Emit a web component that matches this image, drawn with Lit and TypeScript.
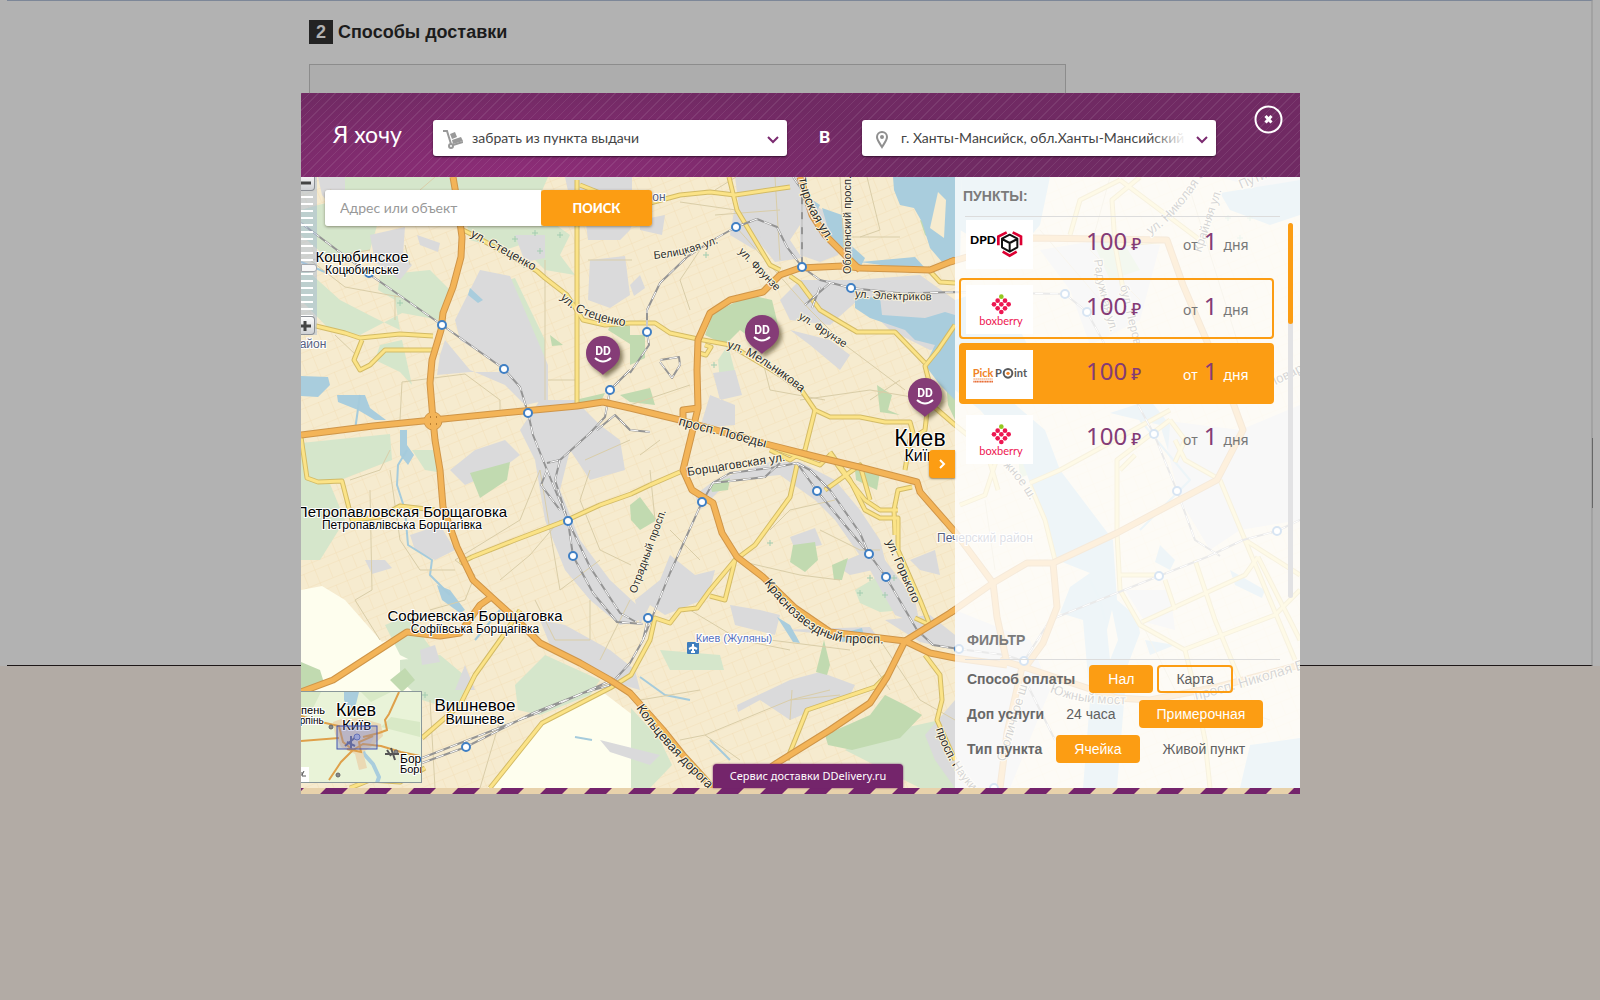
import { LitElement, html, svg, css } from "lit";
import { customElement, property, state } from "lit/decorators.js";

/* ---------- Map data ---------- */

const PALE = [
  "M301 590L322 586 345 600 382 642 398 637 440 700 421 692 301 692Z",
  "M301 520L305 535 301 553Z",
  "M488 788L545 722 600 690 634 716 634 740 645 760 640 788Z",
];
const LIGHT_GREEN = [
  "M345 177H548L538 200 560 215 520 245 505 250 470 240 462 200 440 190 412 190 410 200 345 200Z",
  "M301 265L340 300 375 318 400 330 395 300 378 290 380 275 430 270 450 290 440 320 402 313 360 335 330 330 301 300Z",
  "M318 205L362 195 380 215 370 250 330 260 301 235 301 210Z",
  "M301 443L390 434 392 460 330 484 345 520 320 560 301 560Z",
  "M412 450H437V472L425 470Z",
  "M490 285L515 278 545 340 545 362 530 362Z",
  "M520 230L556 225 570 235 560 255 575 275 545 270 525 250Z",
  "M515 685L545 655 600 680 590 695 540 715 518 710Z",
  "M400 660L440 655 470 680 455 710 422 700 400 680Z M385 625L410 615 425 640 440 660 420 665 400 655Z",
  "M660 650L720 655 724 670 670 670Z",
  "M855 590L885 572 897 590 905 610 880 612 860 603Z",
  "M631 708L660 740 672 765 650 788H631Z",
  "M845 750L872 735 940 720 955 740V788H920Z",
  "M718 360L728 345 735 372 720 382Z",
  "M412 385L402 340 380 345 375 360 400 372Z",
];
const GREEN = [
  "M713 313L750 295 772 300 778 325 760 345 740 330 725 345 705 335Z",
  "M470 473L510 462 507 480 480 498Z",
  "M301 662L320 670 325 686 301 691Z",
  "M390 680L405 668 415 680 402 692Z",
  "M630 335H645V358L630 365Z M620 395L650 388 655 405 630 402Z",
  "M630 505L640 497 657 520 640 530 631 520Z",
  "M793 545L815 542 818 560 805 572 790 562Z",
  "M855 470L880 472 877 490 856 480Z",
  "M885 695L905 705 922 715 900 738 852 750 828 745 825 735 870 715Z",
  "M824 640L830 665 827 675 816 672Z",
  "M877 385L892 395 888 410 900 415 880 412Z",
  "M920 220L935 225 938 245 925 235Z",
  "M550 335L563 345 552 346Z M575 400L605 393 600 403 580 404Z",
  "M630 344L608 330 612 322 630 326Z M710 484L730 478 728 490 712 492Z M832 565L848 558 842 580 834 580Z",
  "M945 370L955 360V420L948 405Z",
  "M1090 235L1125 245 1140 270 1110 280Z M1015 420L1040 470 1020 478Z",
];
const GRAY = [
  "M318 177H345V200L330 205 322 195Z",
  "M370 235L405 227 403 255 412 265 400 280 375 262Z",
  "M417 235L440 243 438 252 420 245Z",
  "M515 235H545V258L525 262Z",
  "M565 177H632V195L640 205 630 230 620 240H588L585 215 570 200Z",
  "M480 270L510 276 528 318 548 365V400L525 405 505 385 470 370 445 340 440 355 437 375 470 372 512 372 545 400 575 400 600 425 620 440 625 470 590 480 570 450 560 490 580 540 610 580 637 605 640 620 620 625 590 600 565 570 545 520 535 460 520 430 540 400 500 365 460 340 455 320Z",
  "M590 260L625 256 630 295 610 308 588 300Z",
  "M735 177H800V225L790 240 802 258 775 262 757 240 740 215Z",
  "M800 195L830 215 845 240 838 255 820 262 800 255Z",
  "M780 300L800 280 855 280 920 275 955 300V345L930 350 890 330 858 300 830 325 790 320Z",
  "M790 330L830 340 850 355 840 370 810 345Z",
  "M735 205L750 230 765 240 755 250 730 235Z",
  "M640 220L665 215 662 235 640 230Z M630 285L640 275 645 288 634 296Z",
  "M713 373L735 370 742 395 720 400Z M710 395L700 428 735 425 735 405Z",
  "M450 470L475 450 505 440 520 455 500 470 465 485Z",
  "M410 535L440 525 455 550 435 560 415 550Z",
  "M365 560L385 560 392 568 372 574Z",
  "M420 650L435 645 440 662 422 665Z",
  "M540 620L565 625 610 650 635 670 640 690 605 680 550 645Z",
  "M465 665L475 690 455 690Z",
  "M670 555L695 575 715 570 708 598 690 605 665 615 650 605 640 625 635 600 660 580Z",
  "M695 495L715 480 770 462 800 462 835 480 860 510 880 540 885 560 915 600 920 625 895 615 870 570 835 520 815 500 780 475 730 480 700 510Z",
  "M790 537L815 528 822 545 795 550Z",
  "M835 565L870 550 873 570 850 575Z",
  "M730 605L760 610 780 615 775 635 735 625Z",
  "M737 705L790 680 820 672 855 685 850 695 790 720 760 700 738 712Z",
  "M885 620L930 615 955 635V650L920 642Z",
  "M780 630L870 627 880 640 850 636Z",
  "M925 735L955 700V788L935 760Z",
  "M600 740L660 755 650 765 610 752Z M910 560L935 550 940 575 920 570Z",
  "M1040 250L1100 240 1160 245 1140 320 1090 345 1070 290Z",
  "M1160 420L1240 430 1300 405V520L1240 530 1210 550 1180 500Z",
  "M955 610L1030 640 1050 690 1010 788H955Z",
  "M1125 590L1170 590 1175 630 1145 622Z M1230 180L1300 200V177H1220Z",
];
const WATER = [
  "M893 177H962L960 262 942 262 930 248 922 222 914 208 900 205 894 190Z",
  "M822 208L842 215 845 240 865 258 860 268 845 250 830 235Z",
  "M808 197L820 205 815 215 809 210Z",
  "M855 298L880 297 882 315 925 318 945 312 955 315V400L940 385 925 365 935 345 915 340 905 330 870 318 855 308Z",
  "M860 262L915 257 925 268 895 267Z",
  "M301 376L328 377 330 385 318 397 301 396Z M337 395L365 395 370 408 386 420 375 420 358 410 338 402Z",
  "M400 430H407V445L414 455 408 465 400 455Z",
  "M437 585L450 590 465 610 460 613 442 600Z",
  "M470 288L483 300 478 303 468 295Z",
  "M777 617L790 625 800 643 793 642Z M835 635L862 628 865 640 840 642Z",
  "M962 177H1050L1040 225 1010 260 960 230Z",
  "M955 300L985 290 1010 310 1030 350 1010 400 1045 430 1060 470 1113 540 1117 600 1137 617 1140 633 1127 667 1117 788H1083L1090 700 1083 620 1060 613 1070 587 1090 573 1057 560 1030 483 1020 455 980 410 955 390Z",
  "M1220 193L1300 180V215L1270 225 1230 210Z",
  "M1160 545L1175 560 1170 570 1155 562Z M1230 570L1265 590 1262 598 1235 585Z M1145 640L1175 645 1150 655Z",
  "M1250 745L1300 738V788H1240Z M1150 400L1170 425 1168 450 1160 425 1110 413Z",
];
const ISLANDS = ["M938 192L946 200 944 238 930 228Z", "M1112 610L1118 640 1110 660 1107 630Z", "M985 345L1005 350 1000 375 985 365Z"];

const STREETS = [
  "M330 190L365 200 M420 190L435 177 M370 250L310 260 345 287 400 297 M410 265L405 245 M395 295L395 320",
  "M356 355L335 335 M402 382L400 420 M402 382L465 374 500 400 500 410 M545 260V400 M588 260H632 M548 380H577",
  "M680 202L736 210 M736 227L810 310 845 345 905 390 M700 250L680 280 690 310 M736 177L715 190 M715 215L780 210",
  "M775 177L780 260 M840 177L845 265 M867 177L880 230 860 237 M850 237H900 M870 400L900 380 M800 400L870 390 930 400",
  "M760 350L770 390 825 400 M630 405L690 385 M640 455L660 440 M670 530L700 560 M735 560L800 575 840 580 M770 530L790 510 835 500",
  "M820 530L860 550 880 550 M540 470L520 520 455 560 M455 560L475 575 465 600 430 610 M390 450L380 470 350 480",
  "M390 470L400 540 420 570 455 570 M370 490L372 590 355 600 380 640 M500 580L530 555 560 520 M540 470L560 590 600 560",
  "M590 470L580 500 600 550 631 565 M630 440L585 460 M535 600L555 640 590 640 590 600 M500 720L480 788 M430 700L435 788",
  "M680 740L705 735 740 760 M705 735L790 700 840 695 M790 700L830 690 M790 720L792 690 M880 640L920 700 955 720",
  "M690 610L740 640 790 650 M770 640L850 650 M870 660L890 690 M630 600L600 660 M650 470L655 520 M640 700L700 690",
  "M985 500L995 570 M1040 230L1100 300 M1110 177L1090 250 1140 300 M1190 190L1240 350 M1140 620L1180 700 M1210 700L1270 720",
];
const YELLOW = [
  "M316 326L345 333 360 338 400 334 433 336",
  "M362 340L354 360 360 370 370 365 385 350 432 350",
  "M301 437L307 478 318 482 342 481 352 520 380 517 400 506 435 510",
  "M463 230L475 236 537 271 545 278 567 295 583 320 605 325 630 323 655 323 670 333 698 339 730 345 780 375 802 391 815 410 830 417 860 417 885 422 910 422 915 440",
  "M577 180V405",
  "M580 185L600 193 650 203 680 195 710 192 735 195 790 187",
  "M729 177L737 210 755 240 770 265 780 270",
  "M790 276L800 283 820 310 840 322 857 332 895 332 925 363",
  "M955 325L938 350 925 366 930 385 925 430 910 440 905 470",
  "M932 405L955 425",
  "M927 268L940 282 955 283",
  "M705 345L711 347 706 355 699 353",
  "M460 563L472 557 515 540 565 521 600 505 631 494 650 485 680 472",
  "M422 738L460 705 475 675 505 633 520 610",
  "M490 788L542 723 610 688 631 675 650 640 655 618 670 623 680 610 697 608 710 590 735 560 755 545 790 497 797 465",
  "M735 560L725 600 710 596 M815 410L805 450 790 460 770 450",
  "M780 450L820 465 830 455 845 475 865 500 880 510 898 510 M825 490L860 465 870 500 M895 535L894 510 898 490 912 487",
  "M830 452L850 480 865 510 880 518 898 518 898 550 920 600 930 625 915 618",
  "M787 760L807 710 875 687 890 672 M925 655L940 675 942 700 937 720 955 760",
  "M350 788L370 780 400 782 425 768",
  "M1120 180L1080 200 1070 235 M1120 180L1200 240 M1167 240L1115 245 1112 200 1140 177 M1115 245L1125 300",
  "M955 425L980 445 998 455 985 495 960 505 M985 445L998 490",
  "M1117 533L1117 460 1170 420 M1117 533L1120 590 1140 625 1185 650 1195 690 1205 740 1210 788",
  "M1030 483L1060 470 1170 410 M1030 485L1045 520 1055 560 M1120 575H1160",
  "M1220 480L1245 540 1295 660 M1195 560L1215 620 1243 688 M1245 540L1300 575 M1258 557L1300 640",
  "M1142 622L1245 575 1258 557 M1183 650L1275 615 1300 590 M1165 580L1175 610",
  "M1175 440L1185 460 1217 478 M1170 420L1185 440 1175 462 M1135 455L1120 470",
];
const ORANGE = [
  "M453 177L457 200 462 237 461 257 453 287 443 313 441 330 432 360 430 383 433 420 435 440 440 470 443 507 457 547 473 580 497 602 517 620 540 643 580 663 610 680 630 693 663 730 683 755 713 788",
  "M301 435L373 426 433 420 513 412 577 406 603 402 630 408 680 420 770 445 817 457 863 468 917 482 920 492 955 532 993 583",
  "M683 424V410L698 408",
  "M955 260L930 270 897 269 860 268 843 266 800 268 780 275 763 292 730 300 710 313 698 340 697 370 698 408 692 433 683 470 692 490 713 503 722 533 737 557 763 577 795 608 830 632 905 641",
  "M800 177L812 215 825 235 860 270",
  "M955 610L905 641 930 653 955 658 1007 665",
  "M905 641L887 677 870 703 830 730 777 763 740 788",
  "M301 692L333 680 407 632 440 636 460 633 480 605 490 598",
  "M950 613L993 583 1027 563 1053 563 1117 533 1217 480 1243 430 1232 400 1217 365 1183 285 1167 240 1033 238 950 262",
  "M1053 563L1057 607 1043 643 1027 665 M993 583L997 617 1007 663 M1000 660L1027 668 1117 698 1150 700 1217 687 1300 665 M1022 667L1007 733 1000 788",
];
const RAILS = [
  "M301 223L369 274 442 325 504 369 520 387 528 413 533 435 547 470 568 521 590 567 620 613 636 622",
  "M568 521L573 556 593 593 617 622 643 624",
  "M630 370L610 390 605 417 590 433 560 460 547 463 M560 460L555 480 568 521 M547 470L541 485 560 510 M597 430L615 415 630 430 650 432",
  "M643 640L670 573 702 502 713 483 730 473 777 467 797 463 817 491 845 525 869 554 886 577 917 630 933 645 959 649",
  "M713 483L740 480 765 477 780 463 M797 463L810 470 830 490 860 533 869 554",
  "M422 763L466 747 533 713 583 693 610 685 630 663 643 640 648 618 M422 758L540 712 610 681",
  "M793 177L802 190V267 M736 227L757 219 777 227 787 247 802 267 820 280 851 288 897 293 920 293 953 292 1065 294 1087 312 1154 434 1177 491 1195 540 1220 556",
  "M736 227L713 240 687 257 660 283 647 310V332L649 345 630 373 M830 283L805 305 M820 287L812 308",
  "M660 362L672 378 680 365 679 357 660 360",
  "M959 649L1005 655 1024 661 1050 620 1067 613 1159 576 1207 557 1243 540 1277 531 1300 520 M1020 670L1055 740",
];
const STREAMS = [
  "M407 450L398 465 397 485 405 510 408 545 432 560 430 575 450 595",
  "M301 262L325 272 M360 395L355 430 M500 610L475 640",
  "M640 677L665 695 690 700 M710 740L730 760 M575 737L592 740",
  "M1090 580L1100 600 1105 620 M1140 420L1190 480 1140 530",
];
const STATIONS: [number, number][] = [
  [369, 273], [442, 325], [504, 369], [610, 390], [528, 413], [736, 227], [802, 267], [851, 288], [647, 332],
  [568, 521], [573, 556], [466, 747], [702, 502], [817, 491], [869, 554], [886, 577], [648, 618], [1065, 294],
  [1087, 312], [1154, 434], [1177, 491], [1277, 531], [1159, 576], [959, 649], [1024, 661], [994, 788],
];
/* [text, x, baseline, size, kind] */
const PLACES: [string, number, number, number, string][] = [
  ["Коцюбинское", 362, 262, 15, "town"], ["Коцюбинське", 362, 274, 12, "town"],
  ["Петропавловская Борщаговка", 402, 517, 15, "town"], ["Петропавлівська Борщагівка", 402, 529, 12, "town"],
  ["Софиевская Борщаговка", 475, 621, 15, "town"], ["Софіївська Борщагівка", 475, 633, 12, "town"],
  ["Вишневое", 475, 711, 17, "town"], ["Вишневе", 475, 724, 14, "town"],
  ["Киев", 920, 446, 23, "town"], ["Київ", 920, 461, 16, "town"],
  ["он", 659, 201, 12, "area"], ["айон", 313, 348, 12, "area"], ["Печерский район", 985, 542, 12, "area"],
  ["Киев (Жуляны)", 734, 642, 11, "port"],
];
/* [text, path, size] */
const ROAD_NAMES: [string, string, number][] = [
  ["ул. Стеценко", "M470 236L500 252 560 286", 12],
  ["ул. Стеценко", "M560 298Q580 322 640 328", 12],
  ["Белицкая ул.", "M654 259Q690 256 730 238", 11],
  ["ул. Фрунзе", "M738 252L790 306", 11],
  ["ул. Фрунзе", "M798 318L860 358", 11],
  ["ул. Мельникова", "M727 348Q756 354 820 408", 12],
  ["ул. Электриков", "M855 297Q890 301 950 300", 11],
  ["Оболонский просп.", "M851 274V170", 11],
  ["тырская ул.", "M799 178Q802 210 840 258", 13],
  ["просп. Победы", "M678 425L790 454", 13],
  ["Борщаговская ул.", "M688 476Q740 468 810 457", 12],
  ["Отрадный просп.", "M636 594L670 500", 11],
  ["Краснозвездный просп.", "M764 583Q805 640 850 643L920 644", 13],
  ["ул. Горького", "M886 542Q898 568 920 620", 12],
  ["Кольцевая дорога", "M636 708Q660 745 730 810", 13],
  ["просп. Науки", "M936 729Q950 775 990 808", 12],
  ["ул. Николая Закревского", "M1150 235Q1185 215 1230 130", 13],
  ["Крайняя ул.", "M1201 253L1225 180", 12],
  ["Радужная ул.", "M1094 260Q1098 295 1115 345", 12],
  ["бул. Перова", "M1120 286L1140 370", 12],
  ["Повар", "M1270 388L1310 368", 13],
  ["жное ш.", "M1003 466Q1020 480 1035 510", 12],
  ["Столичное ш.", "M1005 762L1032 670", 13],
  ["Южный мост", "M1050 692Q1080 706 1140 704", 13],
  ["просп. Николая Бажана", "M1196 700Q1230 692 1340 658", 14],
  ["Путивл", "M1241 189L1310 160", 13],
];
const CROSSES = "M535 230v6m-3-3h6M560 232v6m-3-3h6M515 236v6m-3-3h6M540 248v6m-3-3h6M524 262v6m-3-3h6M400 300v6m-3-3h6M714 362v6m-3-3h6M770 540v6m-3-3h6M870 575v6m-3-3h6M885 592v6m-3-3h6M860 590v6m-3-3h6M894 575v6m-3-3h6M425 692v6m-3-3h6M706 252v6m-3-3h6M1228 215v6m-3-3h6M1250 215v6m-3-3h6M1240 235v6m-3-3h6";

const shapes = (list: string[], cls: string) => list.map((d) => svg`<path class=${cls} d=${d} />`);

@customElement("city-map")
class CityMap extends LitElement {
  static styles = css`
    :host { display: block; overflow: hidden; background: #f6ebcf; }
    svg { display: block; width: 100%; height: 100%; font-family: "Liberation Sans", Arial, sans-serif; }
    path { fill: none; stroke-linejoin: round; }
    .pale { fill: #fefeee; }
    .light { fill: #d5e6cb; }
    .green { fill: #c1dab0; }
    .gray { fill: #dadadb; }
    .water { fill: #a9cddd; }
    .island { fill: #f6ebcf; }
    .street { stroke: #d9cda8; stroke-width: 1; }
    .cross { stroke: #a2cdb0; stroke-width: 1; }
    .stream { stroke: #a5cbdc; stroke-width: 2; }
    .y-case { stroke: #d3bb66; stroke-width: 5; }
    .y-road { stroke: #fbe387; stroke-width: 3; }
    .o-case { stroke: #cf9548; stroke-width: 7; }
    .o-road { stroke: #f3b458; stroke-width: 5; }
    .rail { stroke: #949494; stroke-width: 2; }
    .rail-dash { stroke: #fff; stroke-width: 1; stroke-dasharray: 8 7; }
    .station { fill: #fff; stroke: #3f7fc4; stroke-width: 2; }
    .road-name { fill: #2c2c2c; stroke: #fbf4dd; stroke-width: 2; paint-order: stroke; }
    .town { fill: #000; stroke: #fff; stroke-width: 2; paint-order: stroke; text-anchor: middle; }
    .area { fill: #566080; stroke: #fff; stroke-width: 2; paint-order: stroke; text-anchor: middle; }
    .port { fill: #5670bd; stroke: #fff; stroke-width: 2; paint-order: stroke; text-anchor: middle; }
  `;
  render() {
    return html`<svg viewBox="301 177 999 611" preserveAspectRatio="xMinYMin slice" role="img" aria-label="Киев">
      <defs>
        <pattern id="blocks" width="26" height="22" patternUnits="userSpaceOnUse" patternTransform="rotate(-22)">
          <path d="M0 .5H26M0 8.5H26M.5 0V22M14.5 8V22" stroke="#efd9ae" stroke-opacity=".35" />
        </pattern>
      </defs>
      <rect x="301" y="177" width="999" height="611" fill="#f6ebcf" />
      <rect x="301" y="177" width="999" height="611" fill="url(#blocks)" />
      ${shapes(PALE, "pale")}${shapes(LIGHT_GREEN, "light")}${shapes(GRAY, "gray")}${shapes(GREEN, "green")}
      ${shapes(WATER, "water")}${shapes(ISLANDS, "island")}${shapes(STREAMS, "stream")}
      ${shapes(STREETS, "street")}<path class="cross" d=${CROSSES} />
      ${shapes(YELLOW, "y-case")}${shapes(YELLOW, "y-road")}
      ${shapes(RAILS, "rail")}${shapes(RAILS, "rail-dash")}
      ${shapes(ORANGE, "o-case")}
      <circle cx="433" cy="421" r="9" fill="#f3b458" stroke="#cf9548" />
      ${shapes(ORANGE, "o-road")}
      <path d="M430 417h1m5 0h1m-7 7h1m5 0h1" stroke="#b98033" stroke-width="2" />
      ${STATIONS.map(([x, y]) => svg`<circle class="station" cx=${x} cy=${y} r="4" />`)}
      <rect x="687" y="642" width="12" height="12" rx="1" fill="#3f7ebd" />
      <path d="M693 644v8m-4-3l4-2 4 2m-6 3h4" stroke="#fff" stroke-width="2" />
      ${ROAD_NAMES.map(
        ([name, d, size], i) => svg`<path id=${"road" + i} d=${d} />
          <text class="road-name" font-size=${size}><textPath href=${"#road" + i}>${name}</textPath></text>`
      )}
      ${PLACES.map(([name, x, y, size, kind]) => svg`<text class=${kind} x=${x} y=${y} font-size=${size}>${name}</text>`)}
    </svg>`;
  }
}

@customElement("overview-map")
class OverviewMap extends LitElement {
  static styles = css`
    :host { display: block; }
    svg { display: block; width: 100%; height: 100%; font-family: "Liberation Sans", Arial, sans-serif; }
    text { fill: #000; stroke: #fff; stroke-width: 2; paint-order: stroke; }
    .road { fill: none; stroke: #dfa04a; stroke-width: 2; }
  `;
  render() {
    return html`<svg viewBox="0 0 120 91" preserveAspectRatio="xMinYMin slice">
      <rect width="120" height="91" fill="#e9f3d8" />
      <path d="M0 0H20L10 20 0 25Z M70 10L90 0H60Z M80 35L119 45V30L90 25Z" fill="#d8e9c6" />
      <path d="M43 0H58L55 12 48 18 43 8Z" fill="#a9cddd" />
      <path d="M55 40L63 62 72 72 78 85 76 91" fill="none" stroke="#a9cddd" stroke-width="4" />
      <path d="M32 30L40 27 60 26 80 32 82 44 70 55 62 60 66 76 58 78 54 62 40 55 34 42Z" fill="#ead9b4" />
      <path d="M38 36L60 32 76 40 68 54 50 56 40 48Z" fill="#d9cfc4" />
      <path class="road" d="M98 0L88 22 84 28 86 38 78 41 62 45 M0 49L38 46 M0 24L20 30 38 34 42 50 52 58 40 70 28 88 M52 58L62 52 80 54 100 60 119 64 M46 57L60 60 58 50 72 44" />
      <g fill="#888" stroke="#666"><circle cx="30" cy="35" r="2" /><circle cx="37" cy="83" r="2" /><circle cx="95" cy="60" r="2" /></g>
      <path d="M56 44L44 54M50 44L50 56M46 50L54 54" stroke="#5b6290" stroke-width="2" />
      <circle cx="56" cy="45" r="3" fill="#aab4de" stroke="#5b6bb0" />
      <path d="M84 62H98M90 56L94 68M86 58L90 64" stroke="#555" stroke-width="2" />
      <text x="-6" y="22" font-size="11">рпень</text>
      <text x="-4" y="32" font-size="10">Ірпінь</text>
      <text x="35" y="24" font-size="18">Киев</text>
      <text x="41" y="38" font-size="15">Київ</text>
      <text x="99" y="71" font-size="12">Боряр</text>
      <text x="99" y="81" font-size="11">Бориспіль</text>
      <rect x="36" y="34" width="40" height="23" fill="#7a7fc4" fill-opacity=".32" stroke="#4255b0" />
      <rect x="0" y="75" width="8" height="15" fill="#fff" />
      <path d="M3 79L1 83 M1 80V84H5" fill="none" stroke="#555" />
    </svg>`;
  }
}

/* ---------- Carrier logos ---------- */

const dpdLogo = html`<svg viewBox="0 0 201 147" role="img" aria-label="DPD">
  <text x="12" y="73" font-family="Lato, sans-serif" font-weight="900" font-size="36">DPD</text>
  <g fill="none" stroke="#111" stroke-width="6" stroke-linejoin="round">
    <path d="M131 44L154 56V82L131 95 108 82V56Z M108 57L131 69 154 57 M131 69V95" />
  </g>
  <g fill="none" stroke="#dc0032" stroke-width="8">
    <path d="M122 37L97 50V76" /><path d="M140 37L165 50V76" /><path d="M110 95L131 107 152 95" />
  </g>
</svg>`;

const boxberryLogo = html`<svg viewBox="0 0 201 147" role="img" aria-label="boxberry">
  <circle cx="106" cy="35" r="7" fill="#93c720" />
  <g fill="#ed1651">
    <circle cx="95" cy="47" r="7" /><circle cx="117" cy="47" r="7" />
    <circle cx="84" cy="58" r="7" /><circle cx="106" cy="58" r="7" /><circle cx="128" cy="58" r="7" />
    <circle cx="95" cy="70" r="7" /><circle cx="117" cy="70" r="7" /><circle cx="106" cy="81" r="7" />
  </g>
  <text x="105" y="120" text-anchor="middle" font-family="Lato, sans-serif" font-size="33" fill="#ed1651">boxberry</text>
</svg>`;

const pickpointLogo = html`<svg viewBox="0 0 201 147" role="img" aria-label="PickPoint">
  <g font-family="Lato, sans-serif" font-weight="700" font-size="33">
    <text x="20" y="81" fill="#f08326">Pick</text>
    <text x="87" y="81" fill="#58595b">P</text>
    <text x="144" y="81" fill="#58595b">int</text>
  </g>
  <circle cx="126" cy="70" r="13" fill="#fff" stroke="#58595b" stroke-width="6" />
  <circle cx="126" cy="70" r="5" fill="#f08326" />
  <path d="M22 87H80" stroke="#ef9a66" stroke-width="3" stroke-dasharray="5 1" />
  <path d="M22 95H82" stroke="#e8703a" stroke-width="5" stroke-dasharray="4 1" />
</svg>`;

interface Offer {
  logo: unknown;
  price: number;
  days: number;
}

@customElement("offer-row")
class OfferRow extends LitElement {
  @property({ attribute: false }) offer!: Offer;
  @property() look = "plain";
  static styles = css`
    :host { display: block; }
    .row {
      display: grid; grid-template-columns: 67px 95px auto; column-gap: 53px; align-items: start;
      box-sizing: border-box; width: 100%; height: 61px; padding: 5px 5px 0; margin: 0;
      border: 2px solid transparent; border-radius: 4px; background: none;
      font-family: "Noto Sans", sans-serif; text-align: left; color: #7d7a7c;
    }
    .outlined { border-color: #fc9d13; }
    .filled { border-color: #fc9d13; background: #fc9d13; color: #fff; }
    .logo { display: block; width: 67px; height: 49px; background: #fff; }
    .logo svg { display: block; width: 100%; height: 100%; }
    .price, .term { display: flex; align-items: baseline; line-height: 41px; font-size: 24px; color: #843b76; white-space: nowrap; }
    .price { gap: 4px; }
    .term { gap: 6px; margin-left: -51px; }
    .unit { font-size: 17px; font-weight: 500; }
    .word { font-size: 14px; color: #777; }
    .filled .word { color: #fff; }
  `;
  render() {
    return html`<button type="button" class="row ${this.look}">
      <span class="logo">${this.offer.logo}</span>
      <span class="price">${this.offer.price}<span class="unit">₽</span></span>
      <span class="term"><span class="word">от</span>${this.offer.days}<span class="word">дня</span></span>
    </button>`;
  }
}

const chevronDown = html`<svg class="chevron" viewBox="0 0 12 8" aria-hidden="true">
  <path d="M1 1L6 6 11 1" fill="none" stroke="#7b2a70" stroke-width="2" />
</svg>`;

@customElement("app-root")
class AppRoot extends LitElement {
  @state() private active = new Set(["Нал", "Примерочная", "Ячейка"]);
  private offers: (Offer & { look: string })[] = [
    { logo: dpdLogo, price: 100, days: 1, look: "plain" },
    { logo: boxberryLogo, price: 100, days: 1, look: "outlined" },
    { logo: pickpointLogo, price: 100, days: 1, look: "filled" },
    { logo: boxberryLogo, price: 100, days: 1, look: "plain" },
  ];
  private filters = [
    { label: "Способ оплаты", options: ["Нал", "Карта"], framed: true },
    { label: "Доп услуги", options: ["24 часа", "Примерочная"], framed: false },
    { label: "Тип пункта", options: ["Ячейка", "Живой пункт"], framed: false },
  ];
  private pins = [
    { x: 285, y: 159 },
    { x: 444, y: 138 },
    { x: 607, y: 201 },
  ];

  static styles = css`
    :host { display: block; font-family: Lato, "Noto Sans", sans-serif; color: #555; }
    button, input, select { font: inherit; color: inherit; margin: 0; }
    .page { position: relative; min-height: 100vh; background: #b2aba5; }

    .sheet { height: 666px; background: #b2b2b2; padding: 0 7px; box-sizing: border-box; }
    .sheet-body {
      height: 100%; box-sizing: border-box; border-top: 1px solid #7d8798; border-bottom: 1px solid #1d1718;
      border-right: 2px solid #a2a2a2; position: relative; padding: 19px 0 0 302px;
    }
    .marker { position: absolute; right: -2px; top: 437px; width: 1px; height: 70px; background: #666; }
    .heading { display: flex; align-items: center; gap: 5px; margin: 0; font: bold 18px/24px "Liberation Sans", Arial, sans-serif; color: #1c1c1c; }
    .number { width: 24px; text-align: center; background: #232323; color: #b2b2b2; }
    .frame { max-width: 755px; height: 200px; margin-top: 20px; border: 1px solid #8c8c8c; background: #adadad; }

    .overlay { position: absolute; top: 93px; left: 1px; right: 0; display: flex; justify-content: center; }
    .dialog { flex: 0 1 999px; min-width: 0; }

    .top {
      position: relative; display: flex; align-items: center; box-sizing: border-box; height: 84px; padding: 6px 84px 0 32px;
      background:
        repeating-linear-gradient(135deg, rgba(255, 255, 255, 0.08) 0 1px, transparent 1px 6px),
        radial-gradient(ellipse 400px 100px at 22% 105%, #8f2d79, #702a63);
      color: #fff; font-size: 23px;
    }
    .want { width: 100px; padding-bottom: 8px; white-space: nowrap; }
    .in { width: 75px; padding-bottom: 8px; text-align: center; font-weight: 700; }
    .picker { position: relative; flex: 1; min-width: 0; height: 36px; }
    .select {
      appearance: none; display: block; box-sizing: border-box; width: 100%; height: 36px; padding: 0 30px 2px 39px; border: 0; border-radius: 3px;
      background: #fff; color: #444; font-size: 14px; box-shadow: 0 1px 2px #351030; overflow: hidden;
    }
    .icon { position: absolute; left: 10px; top: 9px; width: 20px; height: 20px; }
    .chevron { position: absolute; right: 8px; top: 16px; width: 12px; height: 8px; pointer-events: none; }
    .fade { position: absolute; right: 30px; top: 2px; width: 36px; height: 32px; background: linear-gradient(90deg, rgba(255, 255, 255, 0), #fff); pointer-events: none; }
    .close { position: absolute; right: 17px; top: 12px; width: 29px; height: 29px; padding: 0; border: 0; background: none; }
    .close svg { display: block; }

    .stage { position: relative; display: flex; justify-content: space-between; min-height: 611px; }
    .map { position: absolute; inset: 0; }
    .search { position: relative; display: flex; width: 327px; height: 36px; margin: 13px 0 0 24px; box-shadow: 0 1px 3px rgba(60, 50, 30, 0.5); border-radius: 3px; }
    .search-box { flex: 1; min-width: 0; box-sizing: border-box; border: 0; border-radius: 3px 0 0 3px; padding: 0 15px 1px; background: #fff; font-size: 14px; outline: 0; }
    .search-box::placeholder { color: #999; opacity: 1; }
    .search-go { width: 111px; border: 0; border-radius: 3px; background: #fc9d13; color: #fff; font-size: 13px; font-weight: 900; }

    .zoom { position: absolute; left: 0; top: -5px; width: 16px; height: 163px; display: flex; flex-direction: column; background: rgba(160, 180, 210, 0.45); clip-path: inset(5px 0 0 0); }
    .zoom-step { width: 14px; height: 19px; padding: 0 2px 0 0; border: 1px solid #8c9096; border-left: 0; border-radius: 0 4px 4px 0; background: linear-gradient(#fdfdfd, #cfd1d4); }
    .zoom-step svg { display: block; }
    .zoom-level {
      appearance: none; writing-mode: vertical-lr; flex: 1; width: 16px; min-height: 0;
      background: repeating-linear-gradient(transparent 0 5px, #fff 5px 7px) 0 0 / 12px 100% no-repeat;
    }
    .zoom-level::-webkit-slider-thumb { appearance: none; width: 16px; height: 8px; border: 1px solid #a6a9ae; border-radius: 0 3px 3px 0; background: #f6f6f6; }

    .pin { position: absolute; width: 36px; height: 42px; padding: 0; border: 0; background: none; filter: drop-shadow(3px 3px 2px rgba(60, 50, 20, 0.6)); }
    .pin svg { display: block; }
    .overview { position: absolute; left: 0; bottom: 5px; width: 121px; height: 92px; border: 1px solid #89979a; border-left: 0; box-sizing: border-box; overflow: hidden; }
    .service {
      position: absolute; left: 412px; bottom: 0; width: 190px; height: 24px; border-radius: 4px 4px 0 0; background: #74256b; color: #fff;
      font-family: "Noto Sans", sans-serif; font-size: 11px; line-height: 24px; text-align: center; text-decoration: none; box-shadow: 0 0 2px #74256b; white-space: nowrap;
    }
    .fold { position: absolute; left: -26px; top: 273px; width: 26px; height: 28px; padding: 0; border: 0; border-radius: 4px 0 0 4px; background: #fc9d13; box-shadow: 0 1px 2px rgba(60, 40, 0, 0.5); }
    .fold svg { display: block; margin: 0 auto; }

    .panel { position: relative; width: 345px; display: flex; flex-direction: column; box-sizing: border-box; background: rgba(255, 255, 255, 0.8); font-family: "Liberation Sans", Arial, sans-serif; }
    .title { margin: 0 20px 0 10px; padding: 0 0 0 2px; border-bottom: 1px solid #dcdcdc; font-size: 14px; line-height: 20px; font-weight: 700; color: #7b7b7b; }
    .points-title { padding: 9px 0 10px; text-indent: -2px; }
    .points { flex: 1; display: grid; grid-template-columns: 1fr 5px; column-gap: 14px; padding: 0 7px 0 4px; }
    .list { list-style: none; display: flex; flex-direction: column; gap: 4px; margin: -4px 0 0; padding: 0; }
    .scroll { height: 375px; margin-top: 6px; border-radius: 3px; background: #e2e2e4; }
    .thumb { height: 101px; border-radius: 3px; background: #fc9d13; }
    .filter-title { padding-bottom: 9px; }
    .filters { display: flex; flex-direction: column; gap: 7px; padding: 5px 12px 25px; font-size: 14px; }
    .filter { display: flex; align-items: center; gap: 14px; height: 28px; }
    .filter-label { font-weight: 700; color: #686868; }
    .options { display: flex; gap: 15px; }
    .options.framed { gap: 4px; }
    .option { height: 28px; box-sizing: border-box; padding: 0 6px 1px; border: 2px solid transparent; border-radius: 4px; background: none; color: #606060; white-space: nowrap; }
    .option.on { border-color: #fc9d13; padding: 0 16px 1px; background: #fc9d13; color: #fff; }
    .framed .option { border-color: #fc9d13; padding: 0 17px 1px; }
    .stripes { display: block; width: 100%; height: 6px; }
  `;

  private toggle(name: string) {
    const next = new Set(this.active);
    if (!next.delete(name)) next.add(name);
    this.active = next;
  }

  render() {
    return html`<div class="page">
      <div class="sheet">
        <div class="sheet-body">
          <h1 class="heading"><span class="number">2</span>Способы доставки</h1>
          <div class="frame"></div>
          <span class="marker"></span>
        </div>
      </div>
      <div class="overlay">
        <section class="dialog" role="dialog" aria-label="Способы доставки">
          <header class="top">
            <label class="want" for="how">Я хочу</label>
            <div class="picker">
              <select class="select" id="how"><option>забрать из пункта выдачи</option></select>
              <svg class="icon" viewBox="0 0 20 20" fill="none" stroke="#999" aria-hidden="true">
                <path d="M0 2H4L8 15 M10 16L20 13" stroke-width="2" />
                <circle cx="8" cy="17" r="2" stroke-width="2" />
                <path d="M7 5L12 3 14 8 9 10Z M9 11L18 8 20 12 10 15Z" fill="#999" stroke="none" />
              </svg>
              ${chevronDown}
            </div>
            <label class="in" for="where">в</label>
            <div class="picker">
              <select class="select" id="where"><option>г. Ханты-Мансийск, обл.Ханты-Мансийский</option></select>
              <svg class="icon" viewBox="0 0 20 20" fill="none" stroke="#8f8f8f" stroke-width="2" aria-hidden="true">
                <path d="M10 18C7 13 5 11 5 8A5 5 0 0 1 15 8C15 11 13 13 10 18Z" /><circle cx="10" cy="8" r="1" />
              </svg>
              <span class="fade"></span>
              ${chevronDown}
            </div>
            <button type="button" class="close" aria-label="Закрыть">
              <svg width="29" height="29" viewBox="0 0 29 29" fill="none" stroke="#fff" aria-hidden="true">
                <circle cx="14.5" cy="14.5" r="13" stroke-width="2" />
                <path d="M11.5 11L17.5 17.5M17.5 11L11.5 17.5" stroke-width="3" />
              </svg>
            </button>
          </header>

          <div class="stage">
            <city-map class="map"></city-map>
            <div class="zoom">
              <button type="button" class="zoom-step" aria-label="Отдалить">
                <svg width="11" height="17" viewBox="0 0 11 17"><path d="M0 10H10" stroke="#444" stroke-width="3" /></svg>
              </button>
              <input class="zoom-level" type="range" min="0" max="16" value="10" aria-label="Масштаб" />
              <button type="button" class="zoom-step" aria-label="Приблизить">
                <svg width="11" height="17" viewBox="0 0 11 17"><path d="M0 9H10M4 4V14" stroke="#444" stroke-width="3" /></svg>
              </button>
            </div>
            <overview-map class="overview"></overview-map>
            ${this.pins.map(
              (p) => html`<button type="button" class="pin" style="left:${p.x}px;top:${p.y}px" aria-label="Пункт выдачи">
                <svg width="36" height="42" viewBox="0 0 36 42" aria-hidden="true">
                  <path d="M17 39C13 34 0 30 0 17A17 17 0 0 1 34 17C34 30 21 34 17 39Z" fill="#853c77" />
                  <text x="17" y="19" text-anchor="middle" font-family="Roboto, sans-serif" font-weight="700" font-size="12" fill="#fff">DD</text>
                  <path d="M9 22Q17 29 25 22" fill="none" stroke="#fff" stroke-width="2" />
                </svg>
              </button>`
            )}
            <form class="search" @submit=${(e: Event) => e.preventDefault()}>
              <input class="search-box" type="text" placeholder="Адрес или объект" aria-label="Адрес или объект" />
              <button class="search-go">ПОИСК</button>
            </form>
            <a class="service" href="#">Сервис доставки DDelivery.ru</a>

            <aside class="panel">
              <button type="button" class="fold" aria-label="Свернуть">
                <svg width="8" height="10" viewBox="0 0 8 10" aria-hidden="true"><path d="M2 1L6 5 2 9" fill="none" stroke="#fff" stroke-width="2" /></svg>
              </button>
              <h2 class="title points-title">ПУНКТЫ:</h2>
              <div class="points">
                <ul class="list">
                  ${this.offers.map((o) => html`<li><offer-row .offer=${o} look=${o.look}></offer-row></li>`)}
                </ul>
                <div class="scroll"><div class="thumb"></div></div>
              </div>
              <h2 class="title filter-title">ФИЛЬТР</h2>
              <div class="filters">
                ${this.filters.map(
                  (f) => html`<div class="filter" role="group" aria-label=${f.label}>
                    <span class="filter-label">${f.label}</span>
                    <div class="options ${f.framed ? "framed" : ""}">
                      ${f.options.map(
                        (o) => html`<button
                          type="button"
                          class="option ${this.active.has(o) ? "on" : ""}"
                          aria-pressed=${this.active.has(o) ? "true" : "false"}
                          @click=${() => this.toggle(o)}
                        >${o}</button>`
                      )}
                    </div>
                  </div>`
                )}
              </div>
            </aside>
          </div>
          <svg class="stripes" aria-hidden="true">
            <defs>
              <pattern id="tape" width="44" height="6" patternUnits="userSpaceOnUse">
                <rect width="44" height="6" fill="#e8d2ab" />
                <path d="M19 6L25 0H47L41 6Z M-25 6L-19 0H3L-3 6Z" fill="#74246c" />
              </pattern>
            </defs>
            <rect width="100%" height="6" fill="url(#tape)" />
          </svg>
        </section>
      </div>
    </div>`;
  }
}
